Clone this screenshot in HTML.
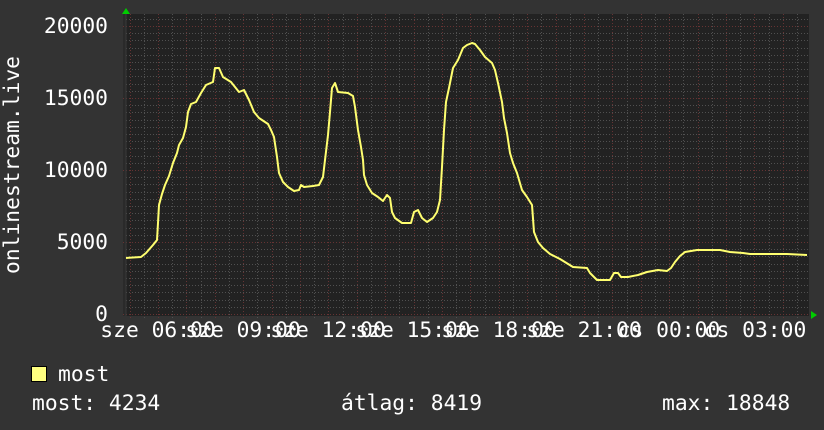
<!DOCTYPE html>
<html><head><meta charset="utf-8"><style>
html,body{margin:0;padding:0;background:#333333;width:824px;height:430px;overflow:hidden}
svg text{font-family:"DejaVu Sans Mono","Liberation Mono",monospace;font-size:21.3px;fill:#ffffff}
</style></head><body>
<svg width="824" height="430" viewBox="0 0 824 430" xmlns="http://www.w3.org/2000/svg">
<rect width="824" height="430" fill="#333333"/>
<rect x="123" y="14" width="686" height="302" fill="#222222"/>
<rect x="123" y="14" width="3" height="302" fill="#2a2a2a"/>
<g id="minor" stroke="#505050" stroke-width="1" stroke-dasharray="1,2">
</g>
<g id="major" stroke="#663333" stroke-width="1" stroke-dasharray="1,2">
</g>
<script>
(function(){var ns="http://www.w3.org/2000/svg",mi=document.getElementById("minor"),ma=document.getElementById("major");
function L(g,x1,y1,x2,y2){var l=document.createElementNS(ns,"line");l.setAttribute("x1",x1);l.setAttribute("y1",y1);l.setAttribute("x2",x2);l.setAttribute("y2",y2);g.appendChild(l);}
for(var y=314;y>=14;y-=7.2){L(mi,126,Math.round(y)+0.5,808,Math.round(y)+0.5);}
for(var x=129.6;x<=808;x+=14.2){L(mi,Math.round(x)+0.5,14,Math.round(x)+0.5,318);}
for(var y=314;y>=14;y-=72){L(ma,123,Math.round(y)+0.5,808,Math.round(y)+0.5);}
for(var x=129.6;x<=808;x+=28.4){L(ma,Math.round(x)+0.5,14,Math.round(x)+0.5,318);}
})();
</script>
<line x1="126" y1="12" x2="126" y2="316" stroke="#3a3a3a"/>
<polyline fill="none" stroke="#ffff70" stroke-width="2" stroke-linejoin="round" points="126,258 141,257 146,253 153,245 157,240 158,223 159,205 162,194 165,185 169,176 173,163 177,153 179,145 183,138 186,127 188,112 191,104 196,102 201,93 206,85 213,82 215,68 219,68 223,77 231,82 239,92 244,90 249,100 254,112 259,118 268,124 271,130 274,137 277,157 279,173 283,182 288,187 294,191 299,190 301,185 304,187 313,186 319,185 323,177 325,160 328,135 330,112 332,88 335,83 338,92 348,93 353,96 355,107 358,130 361,147 363,160 364,175 367,185 372,193 378,197 383,201 387,195 390,198 392,212 395,218 402,223 411,223 414,212 418,210 422,218 427,222 433,218 437,212 440,200 442,167 444,130 446,102 449,88 453,68 458,60 463,48 467,45 472,43 475,44 480,50 485,57 492,63 495,70 498,83 502,102 504,118 507,133 510,153 513,163 517,173 522,190 527,197 532,205 534,232 538,242 543,248 550,254 560,259 573,267 587,268 590,273 597,280 610,280 614,273 618,273 621,277 628,277 638,275 647,272 658,270 667,271 671,268 675,262 680,256 685,252 697,250 720,250 730,252 743,253 750,254 775,254 787,254 807,255"/>
<polygon points="122,14 130,14 126,8" fill="#00cc00"/>
<polygon points="811,311 811,319 817,315" fill="#00cc00"/>
<g text-anchor="end">
<text x="108" y="33">20000</text>
<text x="108" y="105">15000</text>
<text x="108" y="177">10000</text>
<text x="108" y="249">5000</text>
<text x="108" y="321">0</text>
</g>
<text transform="translate(19,165) rotate(-90)" text-anchor="middle">onlinestream.live</text>
<g text-anchor="middle">
<text x="158" y="337">sze 06:00</text>
<text x="243" y="337">sze 09:00</text>
<text x="328" y="337">sze 12:00</text>
<text x="413" y="337">sze 15:00</text>
<text x="499" y="337">sze 18:00</text>
<text x="584" y="337">sze 21:00</text>
<text x="669" y="337">cs 00:00</text>
<text x="755" y="337">cs 03:00</text>
</g>
<rect x="31.5" y="366.5" width="15" height="15" fill="#ffff80" stroke="#000" stroke-width="1"/>
<text x="58" y="381">most</text>
<text x="32" y="410">most: 4234</text>
<text x="341" y="410">átlag: 8419</text>
<text x="662" y="410">max: 18848</text>
</svg>
</body></html>
